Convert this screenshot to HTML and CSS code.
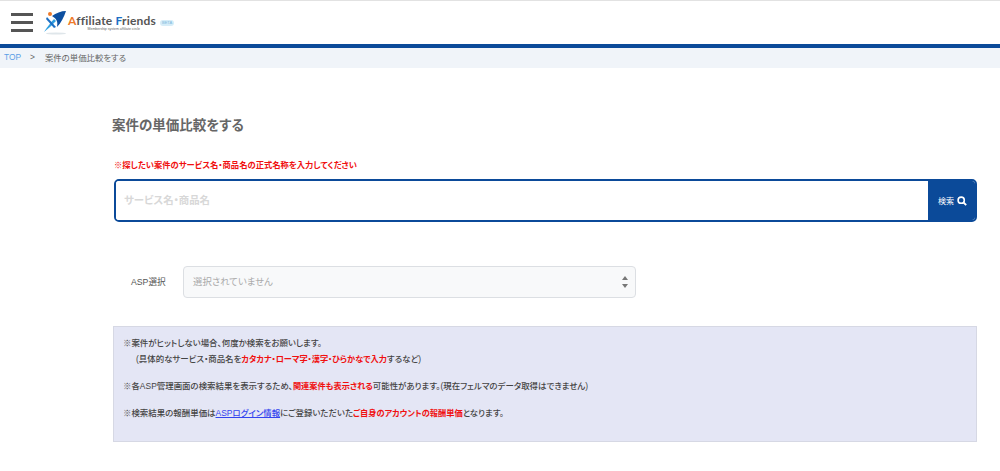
FILE: index.html
```html
<!DOCTYPE html>
<html lang="ja">
<head>
    <meta charset="UTF-8">
    <meta name="viewport" content="width=device-width, initial-scale=1.0">
    <title>案件の単価比較をする</title>
    <link rel="stylesheet" href="styles.css">
</head>
<body>
    <header class="header">
        <div class="menu-icon">
            <span></span>
            <span></span>
            <span></span>
        </div>
        <a class="logo" href="#">
            <svg class="logo-mark" width="26" height="26" viewBox="0 0 26 26">
                <ellipse cx="13" cy="23.5" rx="10" ry="1" fill="#dfe6ea"/>
                <path d="M1 22 C5 16 8 12 11 9 L13 11 C9 15 5 19 1 22Z" fill="#2f9fe0"/>
                <path d="M9 6 C13 3 18 1 23 1 C21 7 18 13 14 17 C15 12 14 9 9 6Z" fill="#0d4fa0"/>
                <path d="M4 7 L13 17 L11 18 L3 9Z" fill="#1c6fc4"/>
                <circle cx="7" cy="4" r="2" fill="#ee7a2a"/>
            </svg>
            <span class="logo-text"><span class="logo-name"><b class="orange">A</b>ffiliate <b class="blue">F</b>riends</span><small class="logo-sub">Membership system affiliate circle</small></span>
            <span class="logo-badge">BETA</span>
        </a>
    </header>
    <nav class="breadcrumb">
        <a href="#">TOP</a>
        <span class="sep">&gt;</span>
        <span>案件の単価比較をする</span>
    </nav>
    <main class="content">
        <h1 class="page-title">案件の単価比較をする</h1>
        <p class="note">※探したい案件のサービス名・商品名の正式名称を入力してください</p>
        <form class="search-box">
            <input class="search-input" type="text" placeholder="サービス名・商品名">
            <button class="search-btn" type="button">検索
                <svg width="10" height="10" viewBox="0 0 10 10">
                    <circle cx="4.2" cy="4.2" r="3.1" fill="none" stroke="#fff" stroke-width="1.6"/>
                    <path d="M6.5 6.5 L9.2 9.2" stroke="#fff" stroke-width="1.8"/>
                </svg>
            </button>
        </form>
        <div class="asp-row">
            <label class="asp-label">ASP選択</label>
            <div class="asp-select">
                <span>選択されていません</span>
                <span class="arrows"></span>
            </div>
        </div>
        <div class="info-box">
            <p>※案件がヒットしない場合、何度か検索をお願いします。<br>
            <span class="indent">(具体的なサービス・商品名を<em>カタカナ・ローマ字・漢字・ひらかなで入力</em>するなど)</span></p>
            <p>※各ASP管理画面の検索結果を表示するため、<em>関連案件も表示される</em>可能性があります。(現在フェルマのデータ取得はできません)</p>
            <p>※検索結果の報酬単価は<a href="#">ASPログイン情報</a>にご登録いただいた<em>ご自身のアカウントの報酬単価</em>となります。</p>
        </div>
    </main>
</body>
</html>
```

FILE: styles.css
```css
* {
    box-sizing: border-box;
}

html, body {
    height: 471px;
    overflow: hidden;
}

body {
    margin: 0;
    background-color: #fff;
    color: #555;
    font-family: 'Liberation Sans', 'Noto Sans CJK JP', sans-serif;
    font-feature-settings: "palt";
}

.header {
    display: flex;
    align-items: center;
    height: 48px;
    padding-left: 11px;
    border-top: 1px solid #e2e2e2;
    border-bottom: 4px solid #0b4a99;
}

.menu-icon {
    display: flex;
    flex-direction: column;
    gap: 5px;
    width: 22px;
}

.menu-icon span {
    height: 3px;
    background-color: #555;
}

.logo {
    display: flex;
    align-items: center;
    margin-left: 10px;
    text-decoration: none;
}

.logo-text {
    display: flex;
    flex-direction: column;
    margin-left: -1px;
    color: #555;
}

.logo-name {
    font-family: 'Lato', sans-serif;
    font-size: 12px;
    font-weight: 700;
    line-height: 13px;
    letter-spacing: 0.2px;
}

.logo-name b {
    font-weight: 700;
}

.orange {
    color: #ee7a2a;
}

.blue {
    color: #1c6fc4;
}

.logo-sub {
    font-size: 3.5px;
    line-height: 4px;
    text-align: right;
    padding-right: 16px;
    color: #666;
}

.logo-badge {
    margin-left: 4px;
    padding: 0 2px;
    border-radius: 4px;
    background-color: #d6edf8;
    color: #7fb9dc;
    font-size: 4px;
    line-height: 6px;
}

.breadcrumb {
    display: flex;
    align-items: center;
    height: 20px;
    padding: 0 0 3px 4px;
    background-color: #f0f4f9;
    font-size: 8.4px;
    color: #666;
}

.breadcrumb a {
    color: #5a9ee6;
    text-decoration: none;
}

.breadcrumb .sep {
    margin: 0 10px 0 9px;
}

.content {
    padding: 48px 23px 0 113px;
}

.page-title {
    margin: 0;
    margin-left: -1px;
    font-size: 13.5px;
    line-height: 20px;
    font-weight: bold;
    color: #666;
}

.note {
    margin: 22px 0 0 1px;
    font-size: 8.3px;
    line-height: 14px;
    font-weight: bold;
    color: #f01010;
}

.search-box {
    display: flex;
    height: 43px;
    margin: 7px 0 0 1px;
    border: 2px solid #0b4a99;
    border-radius: 5px;
    overflow: hidden;
}

.search-input {
    flex: 1;
    min-width: 0;
    padding: 0 8px;
    border: none;
    outline: none;
    font-family: inherit;
    font-feature-settings: inherit;
    font-size: 10.4px;
}

.search-input::placeholder {
    color: #d8d8d8;
    font-weight: bold;
}

.search-btn {
    display: flex;
    align-items: center;
    justify-content: center;
    gap: 3px;
    width: 47px;
    padding: 0 0 0 2px;
    border: none;
    background-color: #0b4a99;
    color: #fff;
    font-family: inherit;
    font-size: 8px;
}

.asp-row {
    display: flex;
    align-items: center;
    margin-top: 44px;
}

.asp-label {
    width: 70px;
    padding: 0 0 2px 18px;
    font-size: 8.7px;
    color: #555;
}

.asp-select {
    display: flex;
    align-items: center;
    justify-content: space-between;
    width: 453px;
    height: 32px;
    padding: 0 7px 2px 9px;
    border: 1px solid #dcdfe3;
    border-radius: 4px;
    background-color: #f8f9fa;
    font-size: 9.4px;
    color: #aaa;
}

.arrows {
    display: flex;
    flex-direction: column;
    gap: 4px;
    margin-top: 2px;
}

.arrows::before, .arrows::after {
    content: "";
    width: 0;
    height: 0;
    border-left: 3.5px solid transparent;
    border-right: 3.5px solid transparent;
}

.arrows::before {
    border-bottom: 4px solid #777;
}

.arrows::after {
    border-top: 4px solid #777;
}

.info-box {
    height: 116px;
    margin-top: 28px;
    padding: 8px 9px 0;
    border: 1px solid #d6d8e4;
    background-color: #e4e6f5;
    font-size: 8.45px;
    line-height: 16px;
    font-weight: 500;
    color: #444;
}

.info-box p {
    margin: 0 0 10px;
}

.indent {
    padding-left: 13px;
}

.info-box em {
    font-style: normal;
    font-size: 8.2px;
    font-weight: bold;
    color: #f01010;
}

.info-box a {
    color: #3344ee;
}
```
